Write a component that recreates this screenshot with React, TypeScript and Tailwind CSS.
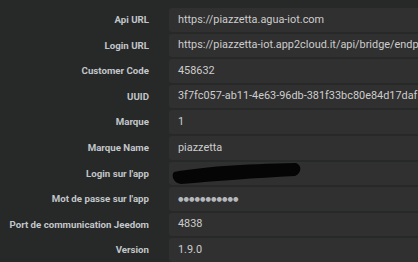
const ROWS = [
  { label: "Api URL", value: "https://piazzetta.agua-iot.com" },
  { label: "Login URL", value: "https://piazzetta-iot.app2cloud.it/api/bridge/endpoint/" },
  { label: "Customer Code", value: "458632" },
  { label: "UUID", value: "3f7fc057-ab11-4e63-96db-381f33bc80e84d17daf" },
  { label: "Marque", value: "1" },
  { label: "Marque Name", value: "piazzetta" },
  { label: "Login sur l'app", value: "", hidden: true },
  { label: "Mot de passe sur l'app", value: "●●●●●●●●●●●", password: true },
  { label: "Port de communication Jeedom", value: "4838" },
  { label: "Version", value: "1.9.0" },
];

function Scribble() {
  // redaction marker over the login
  return (
    <svg className="absolute left-[2px] top-[-2px]" width="132" height="26" viewBox="0 0 132 26">
      <path
        d="M3 12 C 30 7, 70 4, 125 3 C 131 5, 131 13, 124 16 C 84 18, 44 21, 10 24 C 2 23, 0 15, 3 12 Z"
        fill="#050505"
      />
    </svg>
  );
}

export default function App() {
  return (
    <div className="w-[418px] h-[262px] overflow-hidden bg-[#272828] font-['Roboto','Liberation_Sans',sans-serif]">
      <div className="flex flex-col gap-[2px] pt-[8px] w-[560px]">
        {ROWS.map((row) => (
          <div key={row.label} className="flex items-center h-[23.6px]">
            <div className="w-[149px] shrink-0 text-right text-[9.7px] font-bold text-[#c2c6ca] whitespace-nowrap pt-[1px]">
              {row.label}
            </div>
            <div className="relative ml-[20px] flex-1 h-full rounded-[3px] bg-[#303030] flex items-center pl-[9px] text-[10.9px] text-[#cdcdcd] whitespace-nowrap overflow-hidden">
              {row.hidden ? (
                <Scribble />
              ) : row.password ? (
                <span className="font-['DejaVu_Sans'] text-[6.3px] text-[#b4b8bc]">{row.value}</span>
              ) : (
                row.value
              )}
            </div>
          </div>
        ))}
      </div>
    </div>
  );
}
